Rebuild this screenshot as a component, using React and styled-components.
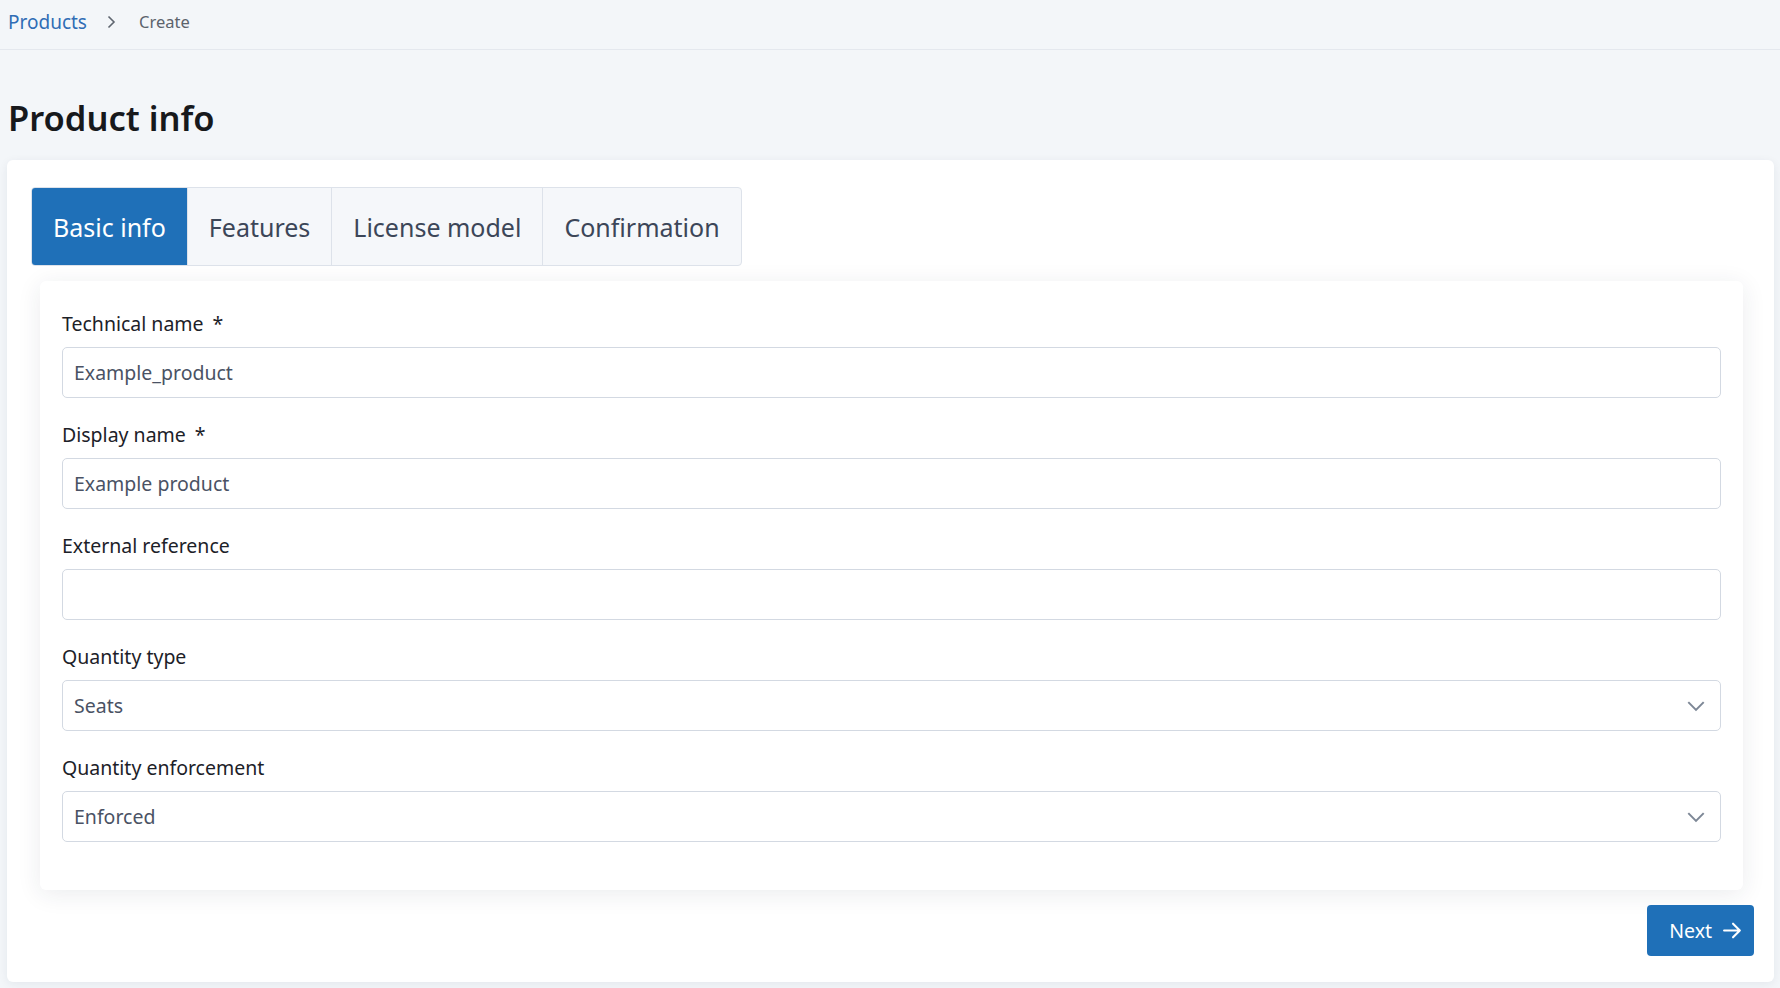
import React, { useState } from 'react';
import styled, { createGlobalStyle } from 'styled-components';

const GlobalStyle = createGlobalStyle`
  html, body {
    margin: 0;
    padding: 0;
    background: #f3f6f9;
    font-family: "Noto Sans", "Open Sans", sans-serif;
    color: #1a202c;
  }
  * { box-sizing: border-box; }
`;

const tabs = ['Basic info', 'Features', 'License model', 'Confirmation'];

const fields = [
  { label: 'Technical name', required: true, value: 'Example_product' },
  { label: 'Display name', required: true, value: 'Example product' },
  { label: 'External reference', value: '' },
  { label: 'Quantity type', value: 'Seats', select: true },
  { label: 'Quantity enforcement', value: 'Enforced', select: true },
];

const App = () => {
  const [active, setActive] = useState(0);

  return (
    <Page>
      <GlobalStyle />
      <Header>
        <Crumb href="#">Products</Crumb>
        <Chevron viewBox="0 0 16 16">
          <path d="M5.5 2.5 L11 8 L5.5 13.5" />
        </Chevron>
        <Current>Create</Current>
      </Header>

      <Title>Product info</Title>

      <Card>
        <TabList>
          {tabs.map((t, i) => (
            <Tab key={t} $active={i === active} onClick={() => setActive(i)}>
              {t}
            </Tab>
          ))}
        </TabList>

        <Panel>
          {fields.map((f) => (
            <Field key={f.label}>
              <Label>
                {f.label}
                {f.required && <Star>*</Star>}
              </Label>
              {f.select ? (
                <SelectBox>
                  <span>{f.value}</span>
                  <SelectArrow viewBox="0 0 20 20">
                    <path d="M3 6.5 L10 13.5 L17 6.5" />
                  </SelectArrow>
                </SelectBox>
              ) : (
                <Input defaultValue={f.value} />
              )}
            </Field>
          ))}
        </Panel>

        <Footer>
          <NextButton>
            Next
            <svg viewBox="0 0 20 20" width="21" height="21">
              <path d="M2 10 H17 M10.5 3.5 L17 10 L10.5 16.5" fill="none" stroke="#fff" strokeWidth="2" strokeLinecap="round" strokeLinejoin="round" />
            </svg>
          </NextButton>
        </Footer>
      </Card>
    </Page>
  );
};

export default App;

const Page = styled.div`
  min-height: 100vh;
  padding-bottom: 6px;
`;

const Header = styled.div`
  height: 50px;
  display: flex;
  align-items: center;
  padding: 0 0 6px 8px;
  border-bottom: 1px solid #e4e8ee;
`;

const Crumb = styled.a`
  color: #2f6db5;
  font-size: 19px;
  text-decoration: none;
`;

const Chevron = styled.svg`
  width: 16px;
  height: 16px;
  margin: 0 0 0 16px;
  fill: none;
  stroke: #5f6670;
  stroke-width: 1.6;
`;

const Current = styled.span`
  margin-left: 20px;
  color: #5c636c;
  font-size: 16.5px;
`;

const Title = styled.h1`
  margin: 0;
  padding: 42px 8px 0;
  height: 110px;
  font-size: 34.5px;
  font-weight: 600;
  color: #17191c;
  line-height: 1.5;
`;

const Card = styled.div`
  margin: 0 6px 0 7px;
  background: #fff;
  border-radius: 6px;
  box-shadow: 0 2px 10px rgba(30, 45, 70, 0.07);
  padding: 27px 20px 26px 24px;
`;

const TabList = styled.div`
  display: inline-flex;
  border: 1px solid #dde2ea;
  border-radius: 4px;
  overflow: hidden;
  background: #f5f7fa;
`;

const Tab = styled.button`
  height: 77px;
  padding: 0 21px;
  border: none;
  border-left: 1px solid #dde2ea;
  background: ${(p) => (p.$active ? '#1f70b8' : 'transparent')};
  color: ${(p) => (p.$active ? '#ffffff' : '#3c4658')};
  font-family: inherit;
  font-size: 25px;
  cursor: pointer;

  &:first-child {
    border-left: none;
  }
`;

const Panel = styled.div`
  margin: 15px 11px 0 9px;
  padding: 29px 22px 25px;
  background: #fff;
  border-radius: 6px;
  box-shadow: 0 4px 24px rgba(30, 45, 70, 0.09);
`;

const Field = styled.div`
  margin-bottom: 23px;
`;

const Label = styled.div`
  font-size: 19.5px;
  line-height: 27px;
  color: #1c2128;
  margin-bottom: 10px;
`;

const Star = styled.span`
  margin-left: 9px;
`;

const Input = styled.input`
  display: block;
  width: 100%;
  height: 51px;
  padding: 0 11px;
  border: 1px solid #d3d9e2;
  border-radius: 5px;
  font-family: inherit;
  font-size: 19.5px;
  color: #4a5264;
  outline: none;
`;

const SelectBox = styled.div`
  height: 51px;
  display: flex;
  align-items: center;
  justify-content: space-between;
  padding: 0 13px 0 11px;
  border: 1px solid #d3d9e2;
  border-radius: 5px;
  font-size: 19.5px;
  color: #4a5264;
`;

const SelectArrow = styled.svg`
  width: 22px;
  height: 22px;
  fill: none;
  stroke: #7d8796;
  stroke-width: 1.8;
`;

const Footer = styled.div`
  display: flex;
  justify-content: flex-end;
  margin-top: 15px;
`;

const NextButton = styled.button`
  display: flex;
  align-items: center;
  gap: 10px;
  height: 51px;
  padding: 0 11px 0 22px;
  background: #1f70b8;
  color: #fff;
  border: none;
  border-radius: 4px;
  font-family: inherit;
  font-size: 19.5px;
  cursor: pointer;
`;
